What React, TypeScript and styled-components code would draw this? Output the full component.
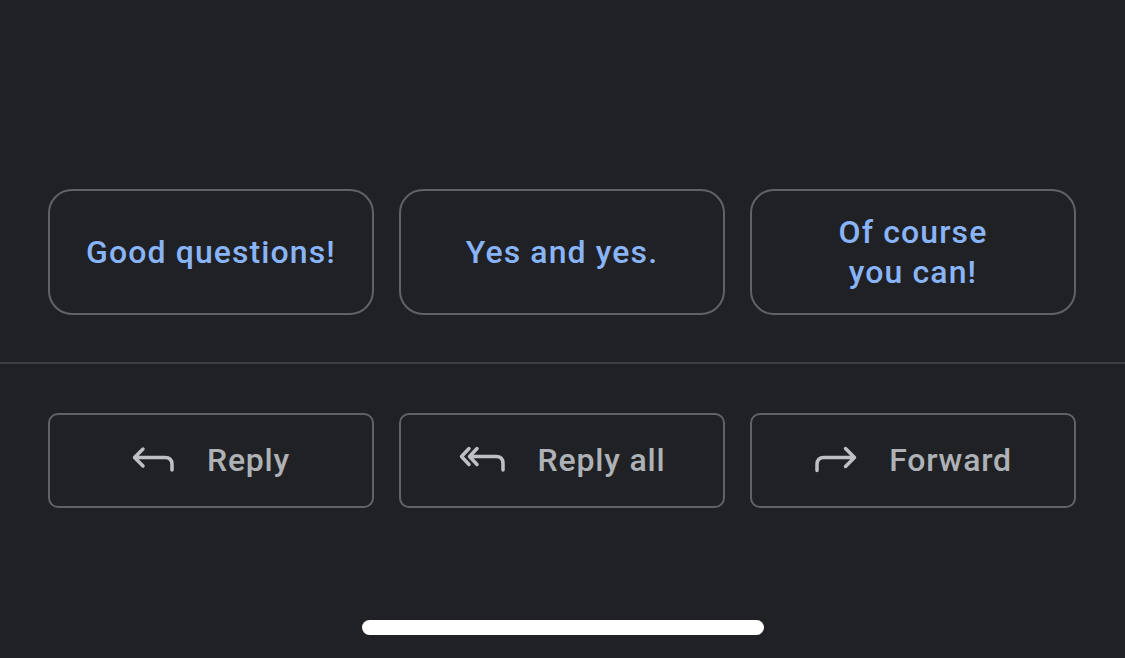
import styled, { createGlobalStyle } from 'styled-components';

const GlobalStyle = createGlobalStyle`
  html, body {
    margin: 0;
    padding: 0;
    background: #202124;
  }
  * {
    box-sizing: border-box;
  }
`;

const suggestions = ['Good questions!', 'Yes and yes.', 'Of course\nyou can!'];

function ReplyIcon() {
    return (
        <Icon width="44" height="30" viewBox="0 0 44 30">
            <path d="M11 4 L2.5 12.5 L11 21 M2.5 12.5 H33 Q40 12.5 40 19.5 V25" />
        </Icon>
    );
}

function ReplyAllIcon() {
    return (
        <Icon width="48" height="30" viewBox="0 0 48 30">
            <path d="M10 3.5 L2.5 11.5 L10 19.5 M18 3.5 L10.5 11.5 L18 19.5 M10.5 11.5 H37 Q44 11.5 44 18.5 V25" />
        </Icon>
    );
}

function ForwardIcon() {
    return (
        <Icon width="44" height="30" viewBox="0 0 44 30">
            <path d="M3 25.5 V19.5 Q3 12.5 10 12.5 H40 M31.5 3.5 L40.5 12.5 L31.5 21.5" />
        </Icon>
    );
}

const actions = [
    { label: 'Reply', icon: <ReplyIcon /> },
    { label: 'Reply all', icon: <ReplyAllIcon /> },
    { label: 'Forward', icon: <ForwardIcon /> },
];

export default function App() {
    return (
        <>
            <GlobalStyle />
            <Screen>
                <ChipRow>
                    {suggestions.map((text) => (
                        <Chip key={text}>{text}</Chip>
                    ))}
                </ChipRow>
                <Divider />
                <ActionRow>
                    {actions.map((a) => (
                        <ActionButton key={a.label}>
                            {a.icon}
                            <ActionLabel>{a.label}</ActionLabel>
                        </ActionButton>
                    ))}
                </ActionRow>
                <HomeIndicator />
            </Screen>
        </>
    );
}

const Screen = styled.div`
  width: 1125px;
  height: 658px;
  background: #202124;
  display: flex;
  flex-direction: column;
  overflow: hidden;
  font-family: Roboto, "Open Sans", sans-serif;
`;

const ChipRow = styled.div`
  display: grid;
  grid-template-columns: repeat(3, 326px);
  gap: 25px;
  padding: 0 48px;
  margin-top: 189px;
`;

const Chip = styled.button`
  height: 126px;
  border: 2.5px solid #5f6368;
  border-radius: 24px;
  background: transparent;
  color: #8ab4f8;
  font-family: inherit;
  font-size: 32px;
  font-weight: 500;
  letter-spacing: 1.1px;
  line-height: 40px;
  white-space: pre-line;
  text-align: center;
  padding: 0 20px;
  display: flex;
  align-items: center;
  justify-content: center;
`;

const Divider = styled.div`
  height: 1.5px;
  background: #3c4043;
  margin-top: 47px;
`;

const ActionRow = styled.div`
  display: grid;
  grid-template-columns: repeat(3, 326px);
  gap: 25px;
  padding: 0 48px;
  margin-top: 49px;
`;

const ActionButton = styled.button`
  height: 95px;
  border: 2.5px solid #5f6368;
  border-radius: 10px;
  background: transparent;
  display: flex;
  align-items: center;
  justify-content: center;
  gap: 31px;
  padding: 0;
`;

const Icon = styled.svg`
  fill: none;
  stroke: #bdc1c6;
  stroke-width: 3.5;
  stroke-linecap: round;
  stroke-linejoin: round;
  flex-shrink: 0;
`;

const ActionLabel = styled.span`
  color: #aeb2b7;
  font-family: Roboto, "Open Sans", sans-serif;
  font-size: 32px;
  font-weight: 500;
  letter-spacing: 0.8px;
  line-height: 40px;
`;

const HomeIndicator = styled.div`
  width: 402px;
  height: 15px;
  border-radius: 8px;
  background: #ffffff;
  align-self: center;
  margin-top: 112px;
`;
